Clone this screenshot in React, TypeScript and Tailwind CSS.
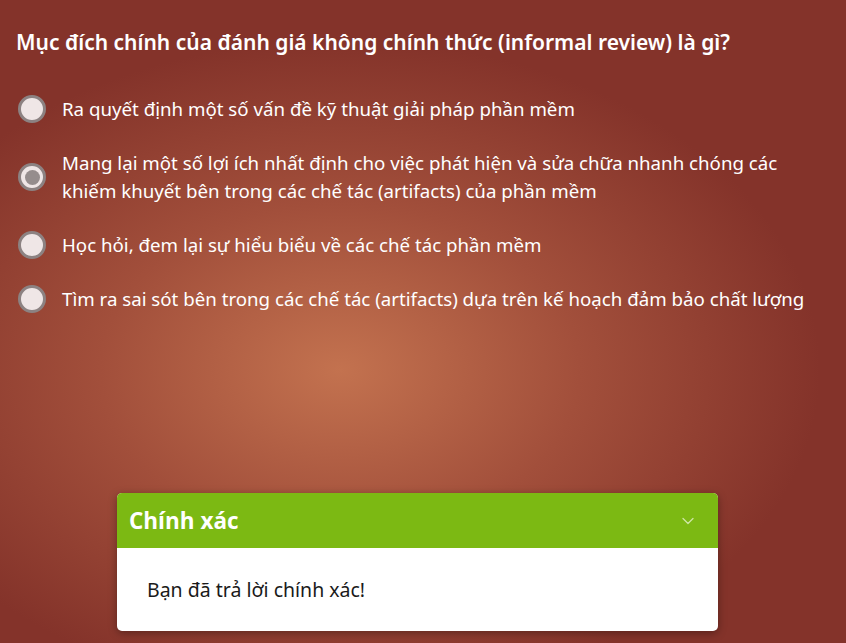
import { ChevronDown } from "lucide-react";

const options = [
    "Ra quyết định một số vấn đề kỹ thuật giải pháp phần mềm",
    "Mang lại một số lợi ích nhất định cho việc phát hiện và sửa chữa nhanh chóng các khiếm khuyết bên trong các chế tác (artifacts) của phần mềm",
    "Học hỏi, đem lại sự hiểu biểu về các chế tác phần mềm",
    "Tìm ra sai sót bên trong các chế tác (artifacts) dựa trên kế hoạch đảm bảo chất lượng",
]

const selected = 1

export default function App() {
    return (
        <div
            className="w-[846px] h-[643px] overflow-hidden flex flex-col bg-[radial-gradient(ellipse_480px_330px_at_340px_370px,#c3724f_0%,#a24f3b_50%,#84332a_100%)] text-white"
            style={{ fontFamily: '"Noto Sans", "Open Sans", sans-serif' }}
        >
            <h1 className="pl-4 pt-[28px] text-[21px] leading-[28px] font-semibold">
                Mục đích chính của đánh giá không chính thức (informal review) là gì?
            </h1>
            <div className="mt-[39px] flex flex-col gap-[26px] pl-[18px] pr-4">
                {options.map((opt, i) => (
                    <label key={i} className="flex items-center gap-4">
                        <span className="shrink-0 w-7 h-7 rounded-full border-[3px] border-[#8c8282] bg-[#efe6e6] flex items-center justify-center">
                            {i === selected && <span className="w-[15px] h-[15px] rounded-full bg-[#958d8d]" />}
                        </span>
                        <span className="text-[18.7px] leading-7 max-w-[760px]">{opt}</span>
                    </label>
                ))}
            </div>
            <div className="mt-auto mb-3 ml-[117px] w-[601px] rounded-[5px] overflow-hidden bg-white shadow-[0_2px_8px_rgba(0,0,0,0.35)]">
                <div className="h-[55px] bg-[#7cb913] flex items-center justify-between pl-3 pr-5">
                    <span className="text-[22.5px] font-bold" style={{ fontFamily: '"Open Sans", sans-serif' }}>Chính xác</span>
                    <ChevronDown className="w-5 h-5 text-[#cfe6a6]" strokeWidth={1.5} />
                </div>
                <div className="h-[83px] flex items-center px-[30px] text-[19.5px] text-[#1a1a1a]">
                    Bạn đã trả lời chính xác!
                </div>
            </div>
        </div>
    )
}
